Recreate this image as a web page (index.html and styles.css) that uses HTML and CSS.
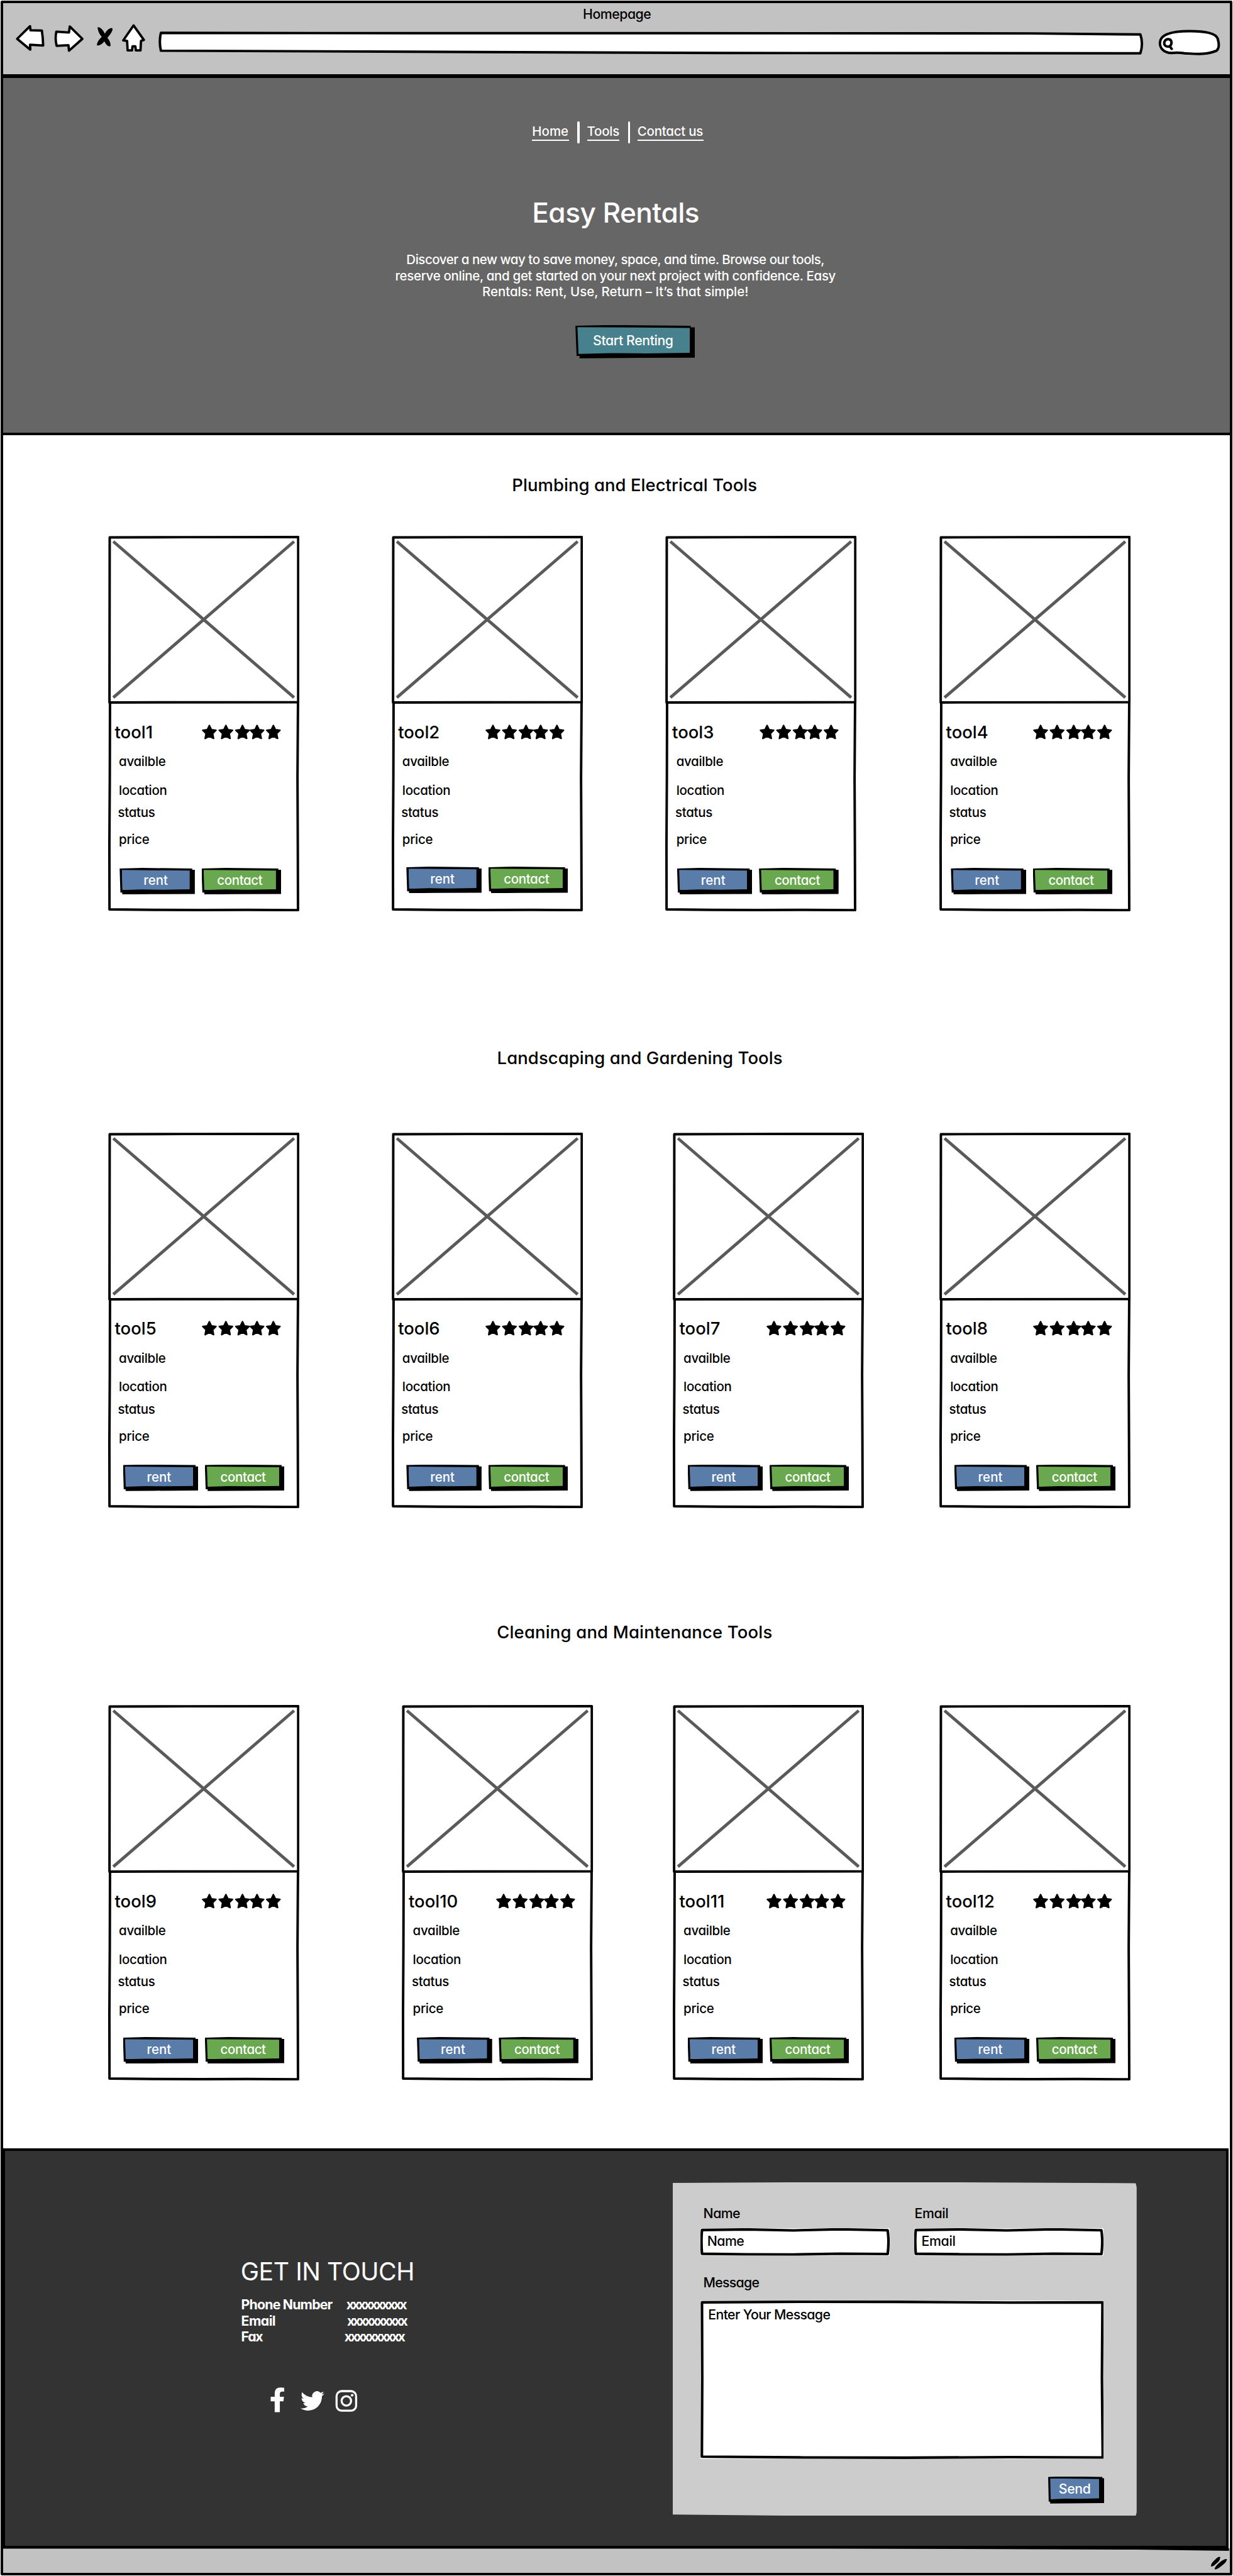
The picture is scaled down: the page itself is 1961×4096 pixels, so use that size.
FILE: index.html
```
<!DOCTYPE html>
<html lang="en">
<head>
<meta charset="utf-8">
<title>Homepage</title>
<link rel="stylesheet" href="styles.css">
</head>
<body>
<svg class="defs" aria-hidden="true">
  <symbol id="frame" viewBox="0 0 371.5 729">
    <g fill="none" stroke="#000" stroke-width="4.8" stroke-linejoin="round">
      <path d="M3 3 L150 2.6 L369 2.4 L369 323 L2.6 323.4 Z"/>
      <path d="M3.6 323 L3.2 470 L2.4 600 L2.6 725 L90 726 L180 726.4 L270 726 L368.6 726.6 L368.2 600 L367.6 470 L368.6 323"/>
    </g>
    <path d="M10 11 L361 314 M361 11 L10 314" fill="none" stroke="#5a5a5a" stroke-width="6"/>
  </symbol>
  <symbol id="stars" viewBox="0 0 154 30">
    <g fill="#000" stroke="#000" stroke-width="3" stroke-linejoin="round">
      <path id="star" d="M14.6 2 L18.6 10 L27.4 11.2 L21 17.6 L22.8 27 L14.6 22.8 L6.4 27 L8.2 17.6 L1.8 11.2 L10.6 10 Z"/>
      <use href="#star" x="32.1"/>
      <use href="#star" x="64.3"/>
      <use href="#star" x="92.6"/>
      <use href="#star" x="124.3"/>
    </g>
  </symbol>
  <symbol id="field" viewBox="0 0 367.5 53.5">
    <path d="M0 0 H367.5 V53.5 H0 Z" fill="#fff"/>
    <path d="M3 3.5 L90 2.4 L180 4.2 L270 2.2 L363.5 4 Q366.6 26 363.6 50 L270 49.4 L180 51 L90 50.6 L3 49.6 Q1 26 3 3.5 Z" fill="#fff" stroke="#000" stroke-width="5" stroke-linejoin="round"/>
  </symbol>
</svg>

<div class="window">
  <header class="toolbar">
    <div class="toolbar-title">Homepage</div>
    <div class="toolbar-row">
      <svg class="ic-back" viewBox="30 46 67 62"><path d="M34 75 L59 50.5 L60 58.5 L82 59 Q84 72 84.500 88 L59 86.500 L59.500 96 Z" fill="#fff" stroke="#000" stroke-width="4.600" stroke-linejoin="round"/></svg>
      <svg class="ic-forward" viewBox="97 46 78 62"><path d="M110 61 L134.500 62.500 L136 51 L160.500 75 L134.500 98 L133.500 87.500 L110.500 88.500 Q107 74 110 61 Z" fill="#fff" stroke="#000" stroke-width="4.600" stroke-linejoin="round"/></svg>
      <svg class="ic-stop" viewBox="175 46 54 62"><path d="M190 52 Q198 52 204 65 Q210 54 218 54 Q222 58 209 73 Q216 82 215 89 Q209 92 203 80 Q197 88 189 88 Q187 82 198 71 Q190 62 190 52 Z"/></svg>
      <svg class="ic-home" viewBox="229 46 65 62"><path d="M260 49 L280 77 L274.500 79 L273.500 97.500 L264.500 97.500 L263.500 89.500 L258 89.500 L257 97.500 L248.500 97.500 L247.500 79 L240 78 Z" fill="#fff" stroke="#000" stroke-width="4.600" stroke-linejoin="round"/></svg>
      <svg class="ic-address" viewBox="294 46 1940 62"><path d="M312 63.500 L800 64 L1300 64 L2000 64.500 L2214 66.500 Q2220 84 2214 103 L1400 102.500 L800 100 L312 98 Q308 80 312 63.500 Z" fill="#fff" stroke="#000" stroke-width="4.800" stroke-linejoin="round"/></svg>
      <svg class="ic-search" viewBox="2234 46 150 62"><g fill="#fff" stroke="#000" stroke-width="4.800" stroke-linecap="round"><path d="M2275 102.500 C2259 102 2252 93 2252 83 C2252 68 2272 60 2310 60 C2338 60 2360 64 2364 74 C2367 84 2367 94 2362 98 C2340 107 2320 104 2300 103 Q2286 101 2275 102.500 Z"/><path d="M2271 89.500 C2262 92 2259 86 2261 80 C2264 74 2273 74 2274.500 81 C2275 86 2273 88 2271 89.500 L2275 94.500"/></g></svg>
    </div>
  </header>

  <section class="hero">
    <nav class="nav">
      <a class="nav-home">Home</a><i></i><a class="nav-tools">Tools</a><i></i><a class="nav-contact">Contact us</a>
    </nav>
    <h1>Easy Rentals</h1>
    <p><span class="l1">Discover a new way to save money, space, and time. Browse our tools,</span><br><span class="l2">reserve online, and get started on your next project with confidence. Easy</span><br><span class="l3">Rentals: Rent, Use, Return – It’s that simple!</span></p>
    <div class="btn start"><span>Start Renting</span></div>
  </section>

  <main>
    <section class="group plumbing">
      <h2>Plumbing and Electrical Tools</h2>
      <div class="cards">
        <article class="card near"><svg class="frame"><use href="#frame"/></svg><div class="head"><h3>tool1</h3><svg class="stars"><use href="#stars"/></svg></div><ul><li>availble</li><li>location</li><li>status</li><li>price</li></ul><div class="actions"><div class="btn rent"><span>rent</span></div><div class="btn contact"><span>contact</span></div></div></article>
        <article class="card high"><svg class="frame"><use href="#frame"/></svg><div class="head"><h3>tool2</h3><svg class="stars"><use href="#stars"/></svg></div><ul><li>availble</li><li>location</li><li>status</li><li>price</li></ul><div class="actions"><div class="btn rent"><span>rent</span></div><div class="btn contact"><span>contact</span></div></div></article>
        <article class="card near"><svg class="frame"><use href="#frame"/></svg><div class="head"><h3>tool3</h3><svg class="stars"><use href="#stars"/></svg></div><ul><li>availble</li><li>location</li><li>status</li><li>price</li></ul><div class="actions"><div class="btn rent"><span>rent</span></div><div class="btn contact"><span>contact</span></div></div></article>
        <article class="card near"><svg class="frame"><use href="#frame"/></svg><div class="head"><h3>tool4</h3><svg class="stars"><use href="#stars"/></svg></div><ul><li>availble</li><li>location</li><li>status</li><li>price</li></ul><div class="actions"><div class="btn rent"><span>rent</span></div><div class="btn contact"><span>contact</span></div></div></article>
      </div>
    </section>

    <section class="group landscaping">
      <h2>Landscaping and Gardening Tools</h2>
      <div class="cards">
        <article class="card"><svg class="frame"><use href="#frame"/></svg><div class="head"><h3>tool5</h3><svg class="stars"><use href="#stars"/></svg></div><ul><li>availble</li><li>location</li><li>status</li><li>price</li></ul><div class="actions"><div class="btn rent"><span>rent</span></div><div class="btn contact"><span>contact</span></div></div></article>
        <article class="card"><svg class="frame"><use href="#frame"/></svg><div class="head"><h3>tool6</h3><svg class="stars"><use href="#stars"/></svg></div><ul><li>availble</li><li>location</li><li>status</li><li>price</li></ul><div class="actions"><div class="btn rent"><span>rent</span></div><div class="btn contact"><span>contact</span></div></div></article>
        <article class="card"><svg class="frame"><use href="#frame"/></svg><div class="head"><h3>tool7</h3><svg class="stars"><use href="#stars"/></svg></div><ul><li>availble</li><li>location</li><li>status</li><li>price</li></ul><div class="actions"><div class="btn rent"><span>rent</span></div><div class="btn contact"><span>contact</span></div></div></article>
        <article class="card"><svg class="frame"><use href="#frame"/></svg><div class="head"><h3>tool8</h3><svg class="stars"><use href="#stars"/></svg></div><ul><li>availble</li><li>location</li><li>status</li><li>price</li></ul><div class="actions"><div class="btn rent"><span>rent</span></div><div class="btn contact"><span>contact</span></div></div></article>
      </div>
    </section>

    <section class="group cleaning">
      <h2>Cleaning and Maintenance Tools</h2>
      <div class="cards">
        <article class="card"><svg class="frame"><use href="#frame"/></svg><div class="head"><h3>tool9</h3><svg class="stars"><use href="#stars"/></svg></div><ul><li>availble</li><li>location</li><li>status</li><li>price</li></ul><div class="actions"><div class="btn rent"><span>rent</span></div><div class="btn contact"><span>contact</span></div></div></article>
        <article class="card"><svg class="frame"><use href="#frame"/></svg><div class="head"><h3>tool10</h3><svg class="stars"><use href="#stars"/></svg></div><ul><li>availble</li><li>location</li><li>status</li><li>price</li></ul><div class="actions"><div class="btn rent"><span>rent</span></div><div class="btn contact"><span>contact</span></div></div></article>
        <article class="card"><svg class="frame"><use href="#frame"/></svg><div class="head"><h3>tool11</h3><svg class="stars"><use href="#stars"/></svg></div><ul><li>availble</li><li>location</li><li>status</li><li>price</li></ul><div class="actions"><div class="btn rent"><span>rent</span></div><div class="btn contact"><span>contact</span></div></div></article>
        <article class="card"><svg class="frame"><use href="#frame"/></svg><div class="head"><h3>tool12</h3><svg class="stars"><use href="#stars"/></svg></div><ul><li>availble</li><li>location</li><li>status</li><li>price</li></ul><div class="actions"><div class="btn rent"><span>rent</span></div><div class="btn contact"><span>contact</span></div></div></article>
      </div>
    </section>
  </main>

  <footer class="footer">
    <section class="touch">
      <h2>GET IN TOUCH</h2>
      <dl>
        <dt class="phone">Phone Number</dt><dd>xxxxxxxxxx</dd>
        <dt>Email</dt><dd class="v2">xxxxxxxxxx</dd>
        <dt class="fax">Fax</dt><dd class="v3">xxxxxxxxxx</dd>
      </dl>
      <div class="social">
        <svg class="so-f" viewBox="520 4630 50 60"><path d="M553 4634.500 V4642 H549 Q544.500 4642 544.500 4646.500 V4652 H552.500 L551.500 4660.800 H544.500 V4682 H534.500 V4660.800 H526.700 V4652 H534.500 V4645 Q534.500 4634 546 4634 Z" fill="#fff"/></svg>
        <svg class="so-t" viewBox="570 4630 70 60"><g transform="translate(584.800 4637) scale(1.92)"><path d="M23.950 4.570a10 10 0 01-2.820.770 4.960 4.960 0 002.160-2.720c-.950.550-2 .950-3.130 1.180a4.920 4.920 0 00-8.380 4.480C7.690 8.090 4.070 6.130 1.640 3.160a4.820 4.820 0 00-.670 2.480c0 1.710.870 3.210 2.190 4.100a4.900 4.900 0 01-2.230-.610v.060a4.920 4.920 0 003.950 4.830 5 5 0 01-2.210.080 4.940 4.940 0 004.600 3.420A9.870 9.870 0 010 19.540a14 14 0 007.550 2.210c9.050 0 14-7.500 14-13.980 0-.210 0-.420-.020-.630a9.940 9.940 0 002.460-2.550z" fill="#fff"/></g></svg>
        <svg class="so-i" viewBox="640 4630 60 60"><g fill="none" stroke="#fff"><rect x="655" y="4641" width="38" height="38" rx="10" stroke-width="4"/><circle cx="674" cy="4660" r="9.200" stroke-width="4"/></g><circle cx="685.300" cy="4649" r="2.600" fill="#fff"/></svg>
      </div>
    </section>
    <section class="form">
      <div class="labels"><span class="name">Name</span><span class="mail">Email</span></div>
      <div class="fields">
        <div class="field"><svg class="sketch" viewBox="0 0 367.5 53.5"><use href="#field"/></svg><span class="name">Name</span></div>
        <div class="field"><svg class="sketch" viewBox="0 0 367.5 53.5"><use href="#field"/></svg><span class="mail">Email</span></div>
      </div>
      <div class="labels second"><span class="msg">Message</span></div>
      <div class="area"><svg class="sketch" viewBox="0 0 783.5 307.5"><path d="M0 0 H783.500 V307.500 H0 Z" fill="#fff"/><path d="M3 3.500 L200 2.400 L380 2.600 L600 4 L780.500 3.500 L779.500 150 L781 304.500 L600 304 L400 305 L200 304.500 L2.800 303 L3.500 150 Z" fill="#fff" stroke="#000" stroke-width="5" stroke-linejoin="round"/></svg><span>Enter Your Message</span></div>
      <div class="btn send"><span>Send</span></div>
    </section>
  </footer>
  <div class="statusbar">
    <svg viewBox="0 0 2380 47"><path d="M0 0 H2380 V5 L2200 2.500 L1600 .5 H0 Z"/><path d="M2345 35 Q2344 30 2353 22 Q2360 15 2363 17 Q2363 24 2355 30 Q2349 36 2345 35 Z M2352 41 Q2352 36 2361 28 Q2371 20 2376 21 Q2376 26 2367 33 Q2358 41 2352 41 Z"/></svg>
  </div>
</div>
</body>
</html>
```
FILE: styles.css
```
/* 1rem = 10 design units */
html { font-size: 8.192px; background: #fff; }
* { box-sizing: border-box; }
body {
  margin: 0;
  overflow: hidden;
  font: 500 2.6rem/3.1rem Inter, "Noto Sans", sans-serif;
  font-feature-settings: "cv11";
  color: #000;
  white-space: nowrap;
}
h1, h2, h3, p, ul, dl, dd { margin: 0; padding: 0; font-weight: inherit; }
li { list-style: none; }
svg { display: block; flex: none; }
.defs { position: absolute; width: 0; height: 0; }

.window {
  width: 239.1rem;
  height: 499.7rem;
  margin: 1px 0 0 1px;
  border: .5rem solid #000;
  border-radius: 2px;
  display: flex;
  flex-direction: column;
}

/* browser chrome */
.toolbar {
  flex: none;
  height: 14.48rem;
  padding-top: .6rem;
  background: #c2c2c2;
  border-bottom: .75rem solid #000;
}
.toolbar-title { text-align: center; letter-spacing: -.06rem; padding-left: .2rem; }
.toolbar-row { display: flex; margin: .28rem 0 0 2.36rem; height: 6.2rem; }
.toolbar-row svg { height: 6.2rem; }
.ic-back { width: 6.7rem; }
.ic-forward { width: 7.8rem; }
.ic-stop { width: 5.4rem; }
.ic-home { width: 6.5rem; }
.ic-address { width: 194rem; }
.ic-search { width: 15rem; }

/* hero */
.hero {
  flex: none;
  height: 69.4rem;
  padding-top: 8.5rem;
  background: #666;
  border-bottom: .5rem solid #000;
  color: #fff;
}
.nav { display: flex; height: 4.2rem; margin-left: 102.7rem; font-size: 2.5rem; line-height: 2.7rem; }
.nav a { height: 3.1rem; margin-top: .6rem; border-bottom: 2px solid #fff; }
.nav i { width: .4rem; border-radius: .2rem; background: #fff; margin: 0 1.45rem 0 1.65rem; }
.nav-home { width: 7.15rem; }
.nav-tools { width: 6.3rem; letter-spacing: -.03rem; }
.nav-contact { width: 12.8rem; letter-spacing: -.03rem; }
.hero h1 { margin-top: 10.2rem; font-size: 5.4rem; line-height: 6.6rem; letter-spacing: -.07rem; text-align: center; padding-right: .3rem; }
.hero p { margin-top: 4.26rem; font-size: 2.5rem; text-align: center; padding-right: .4rem; }
.l1 { letter-spacing: -.055rem; }
.l2 { letter-spacing: -.039rem; }
.l3 { letter-spacing: -.002rem; }

/* sketched buttons: black plate with an offset shadow corner */
.btn {
  display: flex;
  flex: none;
  height: 5.15rem;
  padding: .4rem 1rem .85rem .4rem;
  background: #000;
  color: #fff;
  clip-path: polygon(0 2%, 30% 0, 96.5% 2%, 96.5% 7%, 100% 7%, 100% 98%, 40% 99%, 3.5% 100%, 3.5% 93%, 1% 93%);
}
.btn span {
  flex: 1;
  text-align: center;
  line-height: 3.1rem;
  padding-top: .5rem;
  clip-path: polygon(0 0, 100% 3%, 100% 96%, 60% 98%, 30% 97%, 1% 100%);
}
.start { width: 23.2rem; height: 6.45rem; margin: 4.95rem 0 0 111.1rem; letter-spacing: -.05rem; }
.start span { background: #47818d; padding-top: 1.1rem; padding-right: .2rem; }
.rent { width: 14.6rem; font-size: 2.5rem; }
.rent span { background: #5a7ca9; }
.contact { width: 15.45rem; font-size: 2.5rem; letter-spacing: -.045rem; }
.contact span { background: #6aa84f; }
.send { width: 10.9rem; height: 5.28rem; margin: 3.36rem 0 0 67.55rem; letter-spacing: -.045rem; }
.send span { background: #5a7ca9; }

/* tool groups */
main { flex: none; height: 332.5rem; }
.group h2 { font-size: 3.35rem; line-height: 4rem; }
.plumbing { padding-top: 7.68rem; }
.plumbing h2 { margin: 0 0 7.86rem 98.8rem; letter-spacing: .007rem; }
.landscaping { padding-top: 26.4rem; }
.landscaping h2 { margin: 0 0 12.5rem 95.9rem; letter-spacing: .01rem; }
.cleaning { padding-top: 22.04rem; }
.cleaning h2 { margin: 0 0 12.2rem 95.85rem; letter-spacing: .023rem; }
.cards { display: grid; height: 72.9rem; margin-left: 20.37rem; grid-template-columns: 55.02rem 53.21rem 53.16rem 37.15rem; }
.landscaping .cards { grid-template-columns: 55.02rem 54.6rem 51.77rem 37.15rem; }
.cleaning .cards { grid-template-columns: 57.07rem 52.55rem 51.77rem 37.15rem; }

.card { position: relative; width: 37.15rem; height: 72.9rem; padding: 36.09rem 0 0 1.3rem; }
.frame { position: absolute; left: 0; top: 0; width: 37.15rem; height: 72.9rem; }
.head { display: flex; height: 4rem; }
.head h3 { width: 16.95rem; font-size: 3.35rem; line-height: 4rem; }
.stars { width: 15.4rem; height: 3rem; margin-top: .47rem; }
.card ul { padding-left: .8rem; font-size: 2.5rem; letter-spacing: -.035rem; }
.card li { margin-top: 2.12rem; }
.card li:nth-child(2) { margin-top: 2.47rem; }
.card li:nth-child(3) { margin-top: 1.26rem; margin-left: -.2rem; }
.card li:nth-child(4) { margin-top: 2.14rem; }
.actions { display: flex; gap: 1.3rem; margin: 3.97rem 0 0 1.6rem; }
.near .actions { margin-left: .95rem; }
.high .actions { margin-top: 3.73rem; }

/* footer */
.footer {
  flex: none;
  display: flex;
  height: 77.6rem;
  margin-right: 2px;
  background: #333;
  border: solid #000;
  border-width: .5rem .5rem .5rem .37rem;
  color: #fff;
}
.touch { width: 129.6rem; padding: 20.4rem 0 0 45.75rem; }
.touch h2 { font-size: 4.8rem; font-weight: 400; line-height: 6rem; letter-spacing: -.06rem; }
.touch dl { display: grid; grid-template-columns: 20.4rem auto; margin-top: 1.92rem; font-weight: 700; line-height: 3.13rem; letter-spacing: -.07rem; padding-left: .1rem; }
.touch .phone { letter-spacing: -.1rem; }
.touch .fax { letter-spacing: -.16rem; }
.touch dd { letter-spacing: -.36rem; }
.touch .v2 { padding-left: .15rem; }
.touch .v3 { margin-left: -.35rem; }
.social { display: flex; height: 6rem; margin: 7.79rem 0 0 5.15rem; }
.social svg { height: 6rem; }
.so-f { width: 5rem; }
.so-t { width: 7rem; }
.so-i { width: 6rem; }

.form {
  width: 90.1rem;
  height: 64.75rem;
  margin-top: 6.1rem;
  padding: 4.57rem 0 0 5.37rem;
  background: #ccc;
  color: #000;
  clip-path: polygon(0 .2%, 25% 0, 60% 0, 99.8% .3%, 100% 1.5%, 100% 99%, 99.8% 100%, 30% 100%, 0 99.6%);
}
.name { letter-spacing: -.065rem; }
.mail { letter-spacing: -.04rem; }
.msg { letter-spacing: -.085rem; }
.labels { display: grid; grid-template-columns: 41rem auto; padding-left: .6rem; height: 3.1rem; }
.labels.second { margin-top: 3.7rem; }
.fields { display: flex; gap: 4.85rem; margin-top: 1.28rem; }
.field { position: relative; width: 36.75rem; height: 5.35rem; padding: 1rem 0 0 1.35rem; }
.area { position: relative; width: 78.35rem; height: 30.75rem; margin-top: 1.89rem; padding: 1.2rem 0 0 1.55rem; letter-spacing: -.077rem; }
.sketch { position: absolute; left: 0; top: 0; width: 100%; height: 100%; }
.field span, .area span { position: relative; }

/* status bar */
.statusbar { flex: 1; background: #c2c2c2; }
.statusbar svg { width: 238rem; height: 4.7rem; }
```
